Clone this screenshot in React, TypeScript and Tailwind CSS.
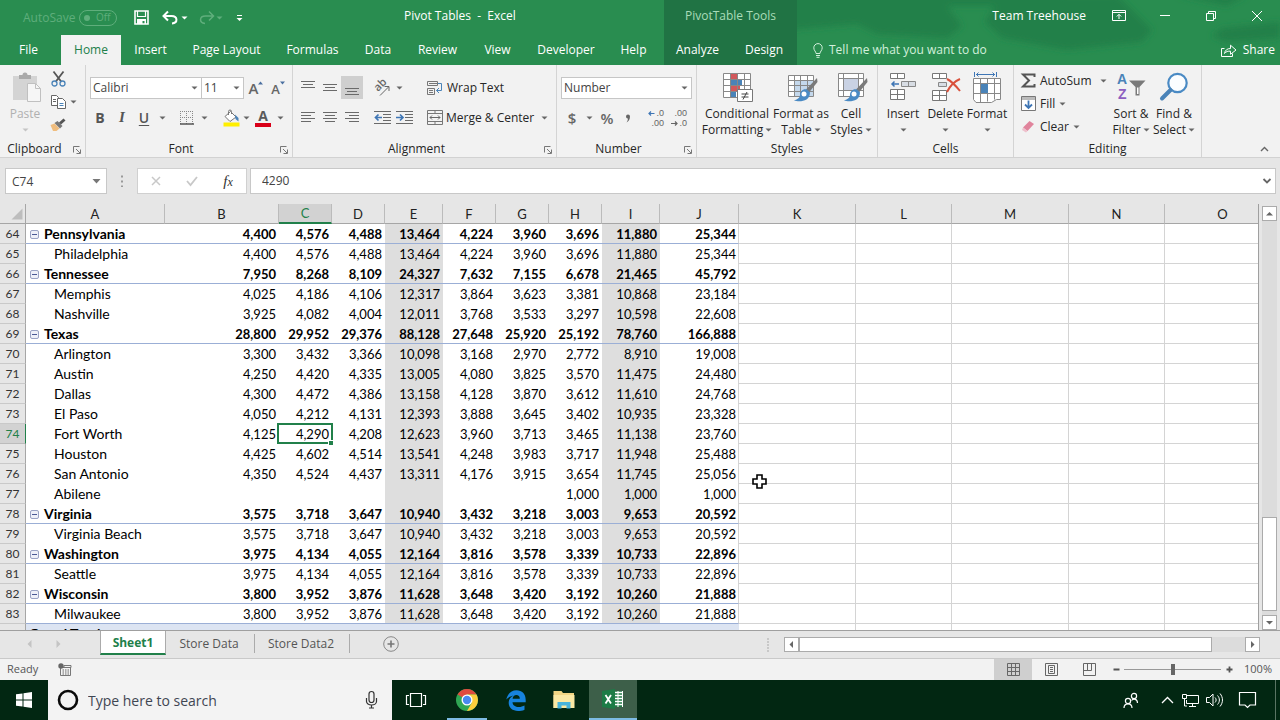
import React from "react";

type Kids = { children?: React.ReactNode };

function Svg({ w, h, children, cls = "" }: { w: number; h: number; cls?: string } & Kids) {
  return (
    <svg width={w} height={h} viewBox={`0 0 ${w} ${h}`} fill="none" className={`shrink-0 overflow-visible ${cls}`} aria-hidden="true">
      {children}
    </svg>
  );
}

function Caret({ cls = "text-[#666]" }: { cls?: string }) {
  return (
    <Svg w={7} h={4} cls={cls}>
      <path d="M0.5 0.5h6l-3 3z" fill="currentColor" />
    </Svg>
  );
}

function IconButton({ label, cls, children }: { label: string; cls: string } & Kids) {
  return (
    <button type="button" aria-label={label} className={`flex shrink-0 items-center justify-center ${cls}`}>
      {children}
    </button>
  );
}

function Group({ title, cls, launcher = false, children }: { title: string; cls: string; launcher?: boolean } & Kids) {
  return (
    <section aria-label={title} className={`flex shrink-0 flex-col border-r border-[#d4d4d4] ${cls}`}>
      <div className="flex h-[76px] shrink-0">{children}</div>
      <div className="flex h-4 items-center leading-4">
        <span className="flex-1 text-center">{title}</span>
        {launcher && (
          <IconButton label={`${title} settings`} cls="mr-px h-4 w-[15px]">
            <Svg w={9} h={9}>
              <path d="M1.500 7.500V1.500H7.500M4 4l4 4M8.500 4.500v4h-4" stroke="#777" />
            </Svg>
          </IconButton>
        )}
      </div>
    </section>
  );
}

function Divider() {
  return <span className="h-6 w-px shrink-0 bg-[#dcdcdc]" />;
}

function BigButton({ cls, icon, a, b }: { cls: string; icon: React.ReactNode; a: string; b?: string }) {
  return (
    <button type="button" className={`flex shrink-0 flex-col items-center whitespace-nowrap leading-4 ${cls}`}>
      <span className="flex h-[41px] items-start pt-[7px]">{icon}</span>
      <span>{a}</span>
      <span className="flex h-4 items-center gap-0.5">
        {b}
        <Caret />
      </span>
    </button>
  );
}

function Lines({ rows }: { rows: [number, number, number][] }) {
  return (
    <Svg w={16} h={16}>
      {rows.map(([y, x1, x2]) => (
        <path key={y} d={`M${x1} ${y}.5H${x2}`} stroke="#6a6a6a" />
      ))}
    </Svg>
  );
}

/* ---------- Title bar and tabs ---------- */

function TitleBar() {
  return (
    <header className="relative shrink-0 overflow-hidden bg-[#298d50] text-xs text-white">
      <svg className="absolute top-0 right-0 h-[65px] w-[483px]" viewBox="0 0 483 65" fill="#248048" aria-hidden="true">
        <defs>
          <filter id="soft"><feGaussianBlur stdDeviation="3" /></filter>
        </defs>
        <g filter="url(#soft)">
          <path d="M-10 -10H270L250 6H150L165 26L150 38L80 34L60 24L-10 30Z" />
          <path d="M205 -5H320L355 30L345 42L270 50L205 38L188 22Z" />
          <path d="M425 28L483 22V38L430 42L415 36Z" />
          <path d="M380 -5H450L430 6Z" />
        </g>
      </svg>
      <div className="relative flex h-[35px] items-stretch">
        <div className="flex w-[404px] shrink-0 items-center pl-[23px]">
          <span className="w-[56px] whitespace-nowrap text-[#5fae7c]">AutoSave</span>
          <button type="button" role="switch" aria-checked="false" aria-label="AutoSave" className="flex h-4 w-[38px] items-center rounded-full border border-[#5fae7c] px-1 text-[10px] text-[#5fae7c]">
            <span className="mr-1.5 size-1.5 rounded-full bg-[#5fae7c]" />
            Off
          </button>
          <IconButton label="Save" cls="ml-4 h-6 w-[16px]">
            <Svg w={15} h={15}>
              <path d="M1 1h13v13H1z" stroke="#fff" strokeWidth="1.600" />
              <path d="M3.500 1v5.500h8V1" stroke="#fff" strokeWidth="1.200" />
              <path d="M3 9h9v5H10.500V11H8.500V14H3z" fill="#fff" />
            </Svg>
          </IconButton>
          <IconButton label="Undo" cls="ml-3 h-6 w-[18px]">
            <Svg w={16} h={14}>
              <path d="M2 5H9.500C16 5 16 12 10 12.500" stroke="#fff" strokeWidth="2" />
              <path d="M6 0.500L1.500 5L6 9.500" stroke="#fff" strokeWidth="2" />
            </Svg>
          </IconButton>
          <Caret cls="ml-0.5 text-white" />
          <IconButton label="Redo" cls="ml-2.5 h-6 w-[18px]">
            <Svg w={16} h={14}>
              <path d="M14 5H6.500C0 5 0 12 6 12.500M10 0.500L14.500 5L10 9.500" stroke="#5fae7c" strokeWidth="1.500" />
            </Svg>
          </IconButton>
          <Caret cls="text-[#5fae7c]" />
          <IconButton label="Customize quick access" cls="ml-2.5 h-6 w-3">
            <Svg w={7} h={8}>
              <path d="M1 1.500H6" stroke="#fff" />
              <path d="M0.500 4h6l-3 3z" fill="#fff" />
            </Svg>
          </IconButton>
        </div>
        <h1 className="flex w-[260px] shrink-0 items-center whitespace-pre pb-1">Pivot Tables  -  Excel</h1>
        <div className="flex w-[133px] shrink-0 items-center justify-center bg-[#207344] pb-1 text-[#a9dcb9]">PivotTable Tools</div>
        <div className="flex flex-1 items-center justify-end pb-1">
          <span className="pr-2.5 whitespace-nowrap">Team Treehouse</span>
          <IconButton label="Ribbon display options" cls="h-8 w-[46px]">
            <Svg w={14} h={12}>
              <path d="M0.500 0.500h13v10H0.500zM0.500 2.500h13M7 9V4.500M4.800 6.500L7 4.300L9.200 6.500" stroke="#fff" />
            </Svg>
          </IconButton>
          <IconButton label="Minimize" cls="h-8 w-[46px]">
            <Svg w={10} h={2}><path d="M0 0.500H10" stroke="#fff" /></Svg>
          </IconButton>
          <IconButton label="Restore" cls="h-8 w-[46px]">
            <Svg w={10} h={10}><path d="M0.500 2.500h7v7H0.500zM2.500 2.500V0.500H9.500V7.500H7.500" stroke="#fff" /></Svg>
          </IconButton>
          <IconButton label="Close" cls="h-8 w-[46px]">
            <Svg w={10} h={10}><path d="M0 0l10 10M10 0l-10 10" stroke="#fff" /></Svg>
          </IconButton>
        </div>
      </div>
      <nav className="relative flex h-[30px] items-stretch whitespace-nowrap">
        <button type="button" className="w-[61px] shrink-0 pr-1">File</button>
        <button type="button" className="w-[60px] shrink-0 bg-[#f2f2f2] text-[#21804a]">Home</button>
        <button type="button" className="w-[59px] shrink-0">Insert</button>
        <button type="button" className="w-[93px] shrink-0">Page Layout</button>
        <button type="button" className="w-[79px] shrink-0">Formulas</button>
        <button type="button" className="w-[52px] shrink-0">Data</button>
        <button type="button" className="w-[67px] shrink-0">Review</button>
        <button type="button" className="w-[53px] shrink-0">View</button>
        <button type="button" className="w-[84px] shrink-0">Developer</button>
        <button type="button" className="mr-[5px] w-[51px] shrink-0">Help</button>
        <button type="button" className="w-[67px] shrink-0 bg-[#207344]">Analyze</button>
        <button type="button" className="w-[66px] shrink-0 bg-[#207344]">Design</button>
        <button type="button" className="ml-4 flex items-center gap-1.5 text-[#d3f0dc]">
          <Svg w={10} h={15}>
            <path d="M3 10.500C3 8.500 0.800 7.500 0.800 4.800a4.200 4.200 0 0 1 8.400 0C9.200 7.500 7 8.500 7 10.500zM3 12.500h4M3.500 14.300h3" stroke="#d3f0dc" />
          </Svg>
          Tell me what you want to do
        </button>
        <button type="button" className="ml-auto flex items-center gap-1.5 pr-[5px]">
          <Svg w={16} h={13}>
            <path d="M3.500 4.500H0.500v8h11V9.500" stroke="#fff" />
            <path d="M3.500 9.500C4 6 6.500 4.500 9.500 4.500V1.200L15 6L9.500 10.300V7.200C7 7 5 7.500 3.500 9.500z" stroke="#fff" />
          </Svg>
          Share
        </button>
      </nav>
    </header>
  );
}

/* ---------- Ribbon ---------- */

function ClipboardGroup() {
  return (
    <Group title="Clipboard" cls="w-[86px]" launcher>
      <button type="button" className="flex w-[50px] flex-col items-center leading-4 text-[#b0b0b0]">
        <span className="flex h-[41px] items-start pt-[7px] pl-1">
          <Svg w={30} h={31}>
            <path d="M1 4h24v24H1z" fill="#d4d4d4" />
            <path d="M7 7V3h3.500a2.500 2.500 0 0 1 5 0H19v4z" fill="#aaa" />
            <path d="M15.500 11.500h8l5 5v13h-13z" fill="#f6f6f6" stroke="#c0c0c0" />
            <path d="M23.500 11.500v5h5" stroke="#c0c0c0" />
          </Svg>
        </span>
        Paste
        <span className="flex h-4 items-center"><Caret cls="text-[#c4c4c4]" /></span>
      </button>
      <div className="flex flex-col pt-[3px] pr-1">
        <IconButton label="Cut" cls="h-[22px] w-4">
          <Svg w={15} h={16}>
            <path d="M2.500 0.500L10.500 11M12.500 0.500L4.500 11" stroke="#555" strokeWidth="1.800" />
            <circle cx="3.500" cy="12.500" r="2.500" stroke="#4a83b8" strokeWidth="1.300" />
            <circle cx="11.500" cy="12.500" r="2.500" stroke="#4a83b8" strokeWidth="1.300" />
          </Svg>
        </IconButton>
        <span className="flex h-[23px] items-center gap-1">
          <IconButton label="Copy" cls="h-5 w-4">
            <Svg w={15} h={14}>
              <path d="M0.500 0.500h5l2 2v8h-7zM2 4.500h3M2 6.500h3" stroke="#666" fill="#fff" />
              <path d="M6.500 3.500h5l3 3v7h-8z" stroke="#666" fill="#fff" />
              <path d="M8.500 8.500h4M8.500 10.500h4" stroke="#4a83b8" />
            </Svg>
          </IconButton>
          <Caret />
        </span>
        <IconButton label="Format Painter" cls="h-[22px] w-4">
          <Svg w={16} h={13}>
            <path d="M0.500 7l4-1.500 5 5-3 2.500H3z" fill="#f0bd7e" />
            <path d="M4.500 5l3-2 5 5-2.500 2.500z" fill="#777" />
            <path d="M9 4.500L13.500 0.500l2 2L11 6.500z" fill="#555" />
          </Svg>
        </IconButton>
      </div>
    </Group>
  );
}

const boxCls = "appearance-none rounded-none border border-[#c6c6c6] bg-white outline-none";

function FontGroup() {
  return (
    <Group title="Font" cls="w-[207px]" launcher>
      <div className="flex flex-col pt-3 pl-1">
        <div className="flex h-[22px] items-center">
          <span className="relative flex items-center">
            <select aria-label="Font name" className={`h-[22px] w-[112px] pl-0.5 text-[#444] ${boxCls}`}><option>Calibri</option></select>
            <span className="pointer-events-none absolute right-1"><Caret /></span>
          </span>
          <span className="relative -ml-px flex items-center">
            <select aria-label="Font size" className={`h-[22px] w-[43px] pl-0.5 text-[#444] ${boxCls}`}><option>11</option></select>
            <span className="pointer-events-none absolute right-1"><Caret /></span>
          </span>
          <IconButton label="Increase font size" cls="w-6">
            <span className="text-[15px] font-semibold leading-4 text-[#666]">A</span>
            <span className="-mt-2.5"><Svg w={5} h={4}><path d="M0 3.500h5L2.500 0.500z" fill="#4a6fa0" /></Svg></span>
          </IconButton>
          <IconButton label="Decrease font size" cls="w-5">
            <span className="pt-0.5 text-[13px] font-semibold leading-4 text-[#666]">A</span>
            <span className="-mt-2.5"><Svg w={5} h={4}><path d="M0 0.500h5L2.500 3.500z" fill="#4a6fa0" /></Svg></span>
          </IconButton>
        </div>
        <div className="mt-2 flex h-[22px] items-center text-[14px] text-[#555]">
          <button type="button" className="w-5 font-bold">B</button>
          <button type="button" className="w-6 font-['Liberation_Serif',serif] text-[15px] font-bold italic">I</button>
          <button type="button" className="w-5 font-semibold underline underline-offset-2">U</button>
          <span className="flex w-4 justify-center"><Caret /></span>
          <span className="mx-1"><Divider /></span>
          <IconButton label="Borders" cls="w-[18px]">
            <Svg w={14} h={14}>
              <path d="M0 0.500H13M0 6.500H13M0.500 0V13M6.500 0V13M12.500 0V13" stroke="#888" strokeDasharray="1 1" />
              <path d="M0 13H14" stroke="#555" strokeWidth="1.500" />
            </Svg>
          </IconButton>
          <span className="flex w-4 justify-center"><Caret /></span>
          <span className="ml-1 mr-1.5"><Divider /></span>
          <IconButton label="Fill Color" cls="w-[18px]">
            <Svg w={17} h={17}>
              <path d="M2 6.500L7.500 1.500L13 7L7 11.500z" fill="#fff" stroke="#777" />
              <path d="M5.500 5V1.500a1.500 1.500 0 0 1 3 0V4" stroke="#777" />
              <path d="M12 4.500l3.500 3.500v3.500L12.500 9z" fill="#4a83b8" />
              <path d="M0.500 12.500h16v4H0.500z" fill="#ffef00" />
            </Svg>
          </IconButton>
          <span className="flex w-3 justify-center"><Caret /></span>
          <IconButton label="Font Color" cls="ml-0.5 w-[18px] flex-col">
            <span className="text-[14px] font-bold leading-3 text-[#5a5a5a]">A</span>
            <span className="mt-px h-1 w-4 bg-[#d90019]" />
          </IconButton>
          <span className="flex w-4 justify-center"><Caret /></span>
        </div>
      </div>
    </Group>
  );
}

function AlignmentGroup() {
  return (
    <Group title="Alignment" cls="w-[264px]" launcher>
      <div className="flex flex-col pt-[11px] pl-1">
        <div className="flex h-[23px] items-center">
          <IconButton label="Top align" cls="h-[23px] w-[22px]"><Lines rows={[[1, 1, 15], [4, 3, 13], [7, 1, 15]]} /></IconButton>
          <IconButton label="Middle align" cls="h-[23px] w-[22px]"><Lines rows={[[4, 1, 15], [7, 3, 13], [10, 1, 15]]} /></IconButton>
          <IconButton label="Bottom align" cls="h-[23px] w-[22px] bg-[#cfcfcf]"><Lines rows={[[8, 1, 15], [11, 3, 13], [14, 1, 15]]} /></IconButton>
          <span className="mx-1"><Divider /></span>
          <IconButton label="Orientation" cls="w-5">
            <Svg w={17} h={16}>
              <text x="0" y="0" transform="translate(5 12) rotate(-45)" fontSize="11" fontFamily="Open Sans" fontWeight="600" fill="#666">ab</text>
              <path d="M7 15.500L15.500 7M11.500 6.500h4.500V11" stroke="#666" />
            </Svg>
          </IconButton>
          <span className="flex w-3 justify-center pl-1"><Caret /></span>
          <span className="mx-3"><Divider /></span>
          <button type="button" className="flex items-center gap-1">
            <Svg w={16} h={16}>
              <path d="M0.500 1.500h10v4h-10zM0.500 8.500h7v6h-7zM2 3.500h12M2 10.500h4M2 12.500h4" stroke="#777" />
              <path d="M11 3.500h3.500v7H9.500M12 8l-2.500 2.500L12 13" stroke="#4a83b8" />
            </Svg>
            Wrap Text
          </button>
        </div>
        <div className="mt-2 flex h-[22px] items-center">
          <IconButton label="Align left" cls="w-[22px]"><Lines rows={[[2, 1, 15], [5, 1, 11], [8, 1, 15], [11, 1, 11]]} /></IconButton>
          <IconButton label="Center" cls="w-[22px]"><Lines rows={[[2, 1, 15], [5, 3, 13], [8, 1, 15], [11, 3, 13]]} /></IconButton>
          <IconButton label="Align right" cls="w-[22px]"><Lines rows={[[2, 1, 15], [5, 5, 15], [8, 1, 15], [11, 5, 15]]} /></IconButton>
          <span className="mx-1"><Divider /></span>
          <IconButton label="Decrease indent" cls="w-[22px]">
            <Svg w={17} h={14}>
              <path d="M0 0.500H17M9 3.500H17M9 6.500H17M9 9.500H17M0 12.500H17" stroke="#6a6a6a" />
              <path d="M8 6.500H2M4.500 3.500L1.500 6.500L4.500 9.500" stroke="#3f76b5" strokeWidth="1.700" />
            </Svg>
          </IconButton>
          <IconButton label="Increase indent" cls="w-[22px]">
            <Svg w={17} h={14}>
              <path d="M0 0.500H17M9 3.500H17M9 6.500H17M9 9.500H17M0 12.500H17" stroke="#6a6a6a" />
              <path d="M0 6.500H6M4 3.500L7 6.500L4 9.500" stroke="#3f76b5" strokeWidth="1.700" />
            </Svg>
          </IconButton>
          <span className="mr-3"><Divider /></span>
          <button type="button" className="flex items-center gap-[3px] whitespace-nowrap">
            <Svg w={16} h={16}>
              <path d="M0.500 0.500h15v14h-15zM0.500 3.500h15M0.500 11.500h15M8 0.500v3M8 11.500v3" stroke="#777" />
              <path d="M3 7.500H13M5 5.500l-2 2 2 2M11 5.500l2 2-2 2" stroke="#666" />
            </Svg>
            Merge &amp; Center
            <span className="ml-1"><Caret /></span>
          </button>
        </div>
      </div>
    </Group>
  );
}

function NumberGroup() {
  return (
    <Group title="Number" cls="w-[140px]" launcher>
      <div className="flex flex-col pt-3 pl-1">
        <span className="relative flex items-center">
          <select aria-label="Number format" className={`h-[22px] w-[131px] pl-0.5 text-[#444] ${boxCls}`}><option>Number</option></select>
          <span className="pointer-events-none absolute right-1"><Caret /></span>
        </span>
        <div className="mt-2 flex h-[22px] items-center text-[15px] text-[#666]">
          <button type="button" className="w-[22px] font-semibold">$</button>
          <span className="flex w-3 justify-center"><Caret /></span>
          <button type="button" className="w-[24px] font-semibold">%</button>
          <IconButton label="Comma Style" cls="w-[18px]">
            <Svg w={6} h={9}><path d="M1 2.500a2 2 0 1 1 4 0C5 5.500 3.500 7.500 1.500 8.500C2.500 7 3 6 2.800 4.500A2 2 0 0 1 1 2.500z" fill="#666" /></Svg>
          </IconButton>
          <span className="mx-1"><Divider /></span>
          <button type="button" aria-label="Increase decimal" className="flex w-[23px] flex-col items-end pr-1 font-['Liberation_Sans',sans-serif] text-[9px] leading-[10px]">
            <span className="flex items-center gap-px">
              <Svg w={7} h={5}><path d="M6.500 2.500H1M3 0.500L1 2.500L3 4.500" stroke="#3f76b5" strokeWidth="1.200" /></Svg>.0
            </span>
            <span>.00</span>
          </button>
          <button type="button" aria-label="Decrease decimal" className="flex w-[23px] flex-col items-end pr-1 font-['Liberation_Sans',sans-serif] text-[9px] leading-[10px]">
            <span>.00</span>
            <span className="flex items-center gap-px">
              <Svg w={7} h={5}><path d="M0 2.500H5.500M4 0.500L6 2.500L4 4.500" stroke="#666" strokeWidth="1.200" /></Svg>.0
            </span>
          </button>
        </div>
      </div>
    </Group>
  );
}

const Brush = () => (
  <>
    <path d="M30 6L19 17.500L22 20.500L30.500 10z" fill="#7a7a7a" />
    <path d="M20 17.500c-4-1-7 2-7 5.500c0 3-3 4.500-6 5.500c5 1.500 16 1.500 16-8z" fill="#4a8ac4" />
    <circle cx="17" cy="22" r="2.500" fill="#fff" />
  </>
);

function StylesGroup() {
  return (
    <Group title="Styles" cls="w-[181px]">
      <BigButton cls="ml-[7px] w-[66px]" a="Conditional" b="Formatting" icon={
        <Svg w={32} h={31} cls="ml-0.5">
          <path d="M1.500 1.500h27v24h-27z" fill="#fff" />
          <path d="M9 1h7v6H9zM9 13h9v6H9z" fill="#d2585b" />
          <path d="M9 7h11v6H9zM9 19h5v6H9z" fill="#4a83b8" />
          <path d="M1.500 1.500h27v24h-27zM1.500 7.500h27M1.500 13.500h27M1.500 19.500h27M8.500 1.500v24M15.500 1.500v24M22.500 1.500v24" stroke="#888" />
          <path d="M15.500 17.500h15v12h-15z" fill="#fff" stroke="#777" />
          <path d="M19.500 22h7M19.500 25h7M25 20l-4 7.500" stroke="#444" />
        </Svg>
      } />
      <BigButton cls="w-[62px]" a="Format as" b="Table" icon={
        <Svg w={32} h={31} cls="ml-1">
          <path d="M1.500 3.500h25v21h-25z" fill="#fff" />
          <path d="M8 9h18v15H8z" fill="#c4d8ec" />
          <path d="M1.500 3.500h25v21h-25zM1.500 8.500h25M1.500 13.500h25M1.500 19.500h25M7.500 3.500v21M13.500 3.500v21M20.500 3.500v21" stroke="#888" />
          <Brush />
        </Svg>
      } />
      <BigButton cls="w-[38px]" a="Cell" b="Styles" icon={
        <Svg w={32} h={31} cls="ml-1">
          <path d="M1.500 1.500h25v23h-25z" fill="#fff" />
          <path d="M7 6h14v12H7z" fill="#c9d2e4" />
          <path d="M1.500 1.500h25v23h-25zM1.500 6.500h25M1.500 18.500h25M6.500 1.500v23M21.500 1.500v23" stroke="#888" />
          <Brush />
        </Svg>
      } />
    </Group>
  );
}

function CellsGroup() {
  return (
    <Group title="Cells" cls="w-[136px]">
      <BigButton cls="ml-[3px] w-[44px]" a="Insert" icon={
        <Svg w={28} h={30}>
          <path d="M1.500 1.500h14v5h-14zM8.500 1.500v5M1.500 17.500h14v10h-14zM1.500 22.500h14M8.500 17.500v10" fill="#fff" stroke="#777" />
          <path d="M12.500 9.500h14v5h-14zM19.500 9.500v5" fill="#d8dde4" stroke="#888" />
          <path d="M10 12H3M5.500 9.500L3 12L5.500 14.500" stroke="#3f76b5" strokeWidth="1.500" />
        </Svg>
      } />
      <BigButton cls="w-[41px]" a="Delete" icon={
        <Svg w={30} h={30}>
          <path d="M1.500 1.500h14v5h-14zM8.500 1.500v5M1.500 18.500h14v10h-14zM1.500 23.500h14M8.500 18.500v10" fill="#fff" stroke="#777" />
          <path d="M7.500 10.500h8v4h-8z" fill="#d8dde4" stroke="#888" />
          <path d="M16 7c4 2 9 7 13 12M29 7c-5 2-10 7-13 13" stroke="#d9513c" strokeWidth="2" />
        </Svg>
      } />
      <BigButton cls="w-[42px]" a="Format" icon={
        <Svg w={30} h={32}>
          <path d="M2.500 0v5M24.500 0v5M4 2.500h19M6.500 0.500l-2 2 2 2M20.500 0.500l2 2-2 2" stroke="#3f76b5" />
          <path d="M1.500 6.500h27v21h-4l-5 3H4l-2.500-3zM1.500 11.500h27M1.500 21.500h27M8.500 6.500v24M15.500 6.500v23M22.500 6.500v21" fill="#fff" stroke="#888" />
          <path d="M9 12h7v9H9z" fill="#4a83b8" />
        </Svg>
      } />
    </Group>
  );
}

function EditingGroup() {
  return (
    <Group title="Editing" cls="w-[188px]">
      <div className="flex w-[96px] flex-col pt-1 pl-[7px]">
        <button type="button" className="flex h-[23px] items-center gap-1 whitespace-nowrap">
          <Svg w={15} h={15}><path d="M13.500 4V1.500H2L8 7.500L2 13.500H13.500V11" stroke="#555" strokeWidth="2" /></Svg>
          AutoSum
          <span className="ml-1"><Caret /></span>
        </button>
        <button type="button" className="flex h-[23px] items-center gap-1">
          <Svg w={15} h={15}>
            <path d="M0.500 0.500h14v14h-14z" fill="#fff" stroke="#777" />
            <path d="M1 1h13v3H1z" fill="#bbb" />
            <path d="M7.500 4.500V12M4 8.500l3.500 3.500L11 8.500" stroke="#3f76b5" strokeWidth="1.800" />
          </Svg>
          Fill
          <Caret />
        </button>
        <button type="button" className="flex h-[23px] items-center gap-1">
          <Svg w={15} h={15}>
            <path d="M2 8.500L8.500 2L13 5L6.500 12z" fill="#e0849c" />
            <path d="M2 8.500L6.500 12L5 13.500L1 11z" fill="#eec0cc" />
          </Svg>
          Clear
          <Caret />
        </button>
      </div>
      <BigButton cls="w-[42px]" a="Sort &amp;" b="Filter" icon={
        <Svg w={30} h={30}>
          <text x="1" y="12" fontSize="14" fontWeight="700" fontFamily="Liberation Sans" fill="#4a83b8">A</text>
          <text x="2" y="27" fontSize="14" fontWeight="700" fontFamily="Liberation Sans" fill="#8d5fc0">Z</text>
          <path d="M13 8.500h16.500L23.500 15v8.500h-4V15z" fill="#7a7a7a" />
          <path d="M21 15.500h1.500V22H21z" fill="#fff" />
        </Svg>
      } />
      <BigButton cls="w-[44px]" a="Find &amp;" b="Select" icon={
        <Svg w={30} h={30}>
          <circle cx="18.500" cy="11" r="9.200" fill="#fbfdff" stroke="#4a8ac4" strokeWidth="2.200" />
          <path d="M11.500 18L3 26.500" stroke="#4a83b8" strokeWidth="4" strokeLinecap="round" />
        </Svg>
      } />
    </Group>
  );
}

function Ribbon() {
  return (
    <div className="flex h-[93px] shrink-0 border-b border-[#d2d2d2] bg-[#f2f2f2] text-xs text-[#262626]">
      <ClipboardGroup />
      <FontGroup />
      <AlignmentGroup />
      <NumberGroup />
      <StylesGroup />
      <CellsGroup />
      <EditingGroup />
      <div className="flex flex-1 items-end justify-end pr-2.5 pb-0.5">
        <IconButton label="Collapse ribbon" cls="h-3 w-3">
          <Svg w={9} h={6}><path d="M1 5l3.500-3.500L8 5" stroke="#666" strokeWidth="1.400" /></Svg>
        </IconButton>
      </div>
    </div>
  );
}

/* ---------- Formula bar ---------- */

function FormulaBar() {
  return (
    <div className="flex h-[46px] shrink-0 items-start bg-[#e6e6e6] pt-2.5 pr-1 pl-[5px] text-xs text-[#444]">
      <span className="relative flex items-center">
        <input aria-label="Name box" defaultValue="C74" className="h-[26px] w-[102px] border border-[#c8c8c8] bg-white pl-1.5 outline-none" />
        <span className="pointer-events-none absolute right-1.5 flex"><Svg w={9} h={5}><path d="M0.500 0h8L4.500 4.500z" fill="#777" /></Svg></span>
      </span>
      <span className="flex h-[26px] w-[30px] items-center justify-center">
        <Svg w={2} h={12}><path d="M1 0.500V12" stroke="#999" strokeWidth="2" strokeDasharray="2 3" /></Svg>
      </span>
      <div className="mr-[3px] flex h-[26px] w-[110px] items-center border border-[#d0d0d0] bg-white">
        <IconButton label="Cancel" cls="w-9"><Svg w={10} h={10}><path d="M1 1l8 8M9 1l-8 8" stroke="#c8c8c8" strokeWidth="1.500" /></Svg></IconButton>
        <IconButton label="Enter" cls="w-9"><Svg w={12} h={10}><path d="M1 5l3.500 4L11 1" stroke="#c8c8c8" strokeWidth="1.800" /></Svg></IconButton>
        <button type="button" aria-label="Insert function" className="w-9 font-['Liberation_Serif',serif] text-[15px] leading-5 italic text-[#333]">
          f<span className="text-xs">x</span>
        </button>
      </div>
      <div className="flex h-[26px] flex-1 items-center border border-[#c8c8c8] bg-white pr-1">
        <input aria-label="Formula" defaultValue="4290" className="min-w-0 flex-1 pl-[11px] outline-none" />
        <Svg w={8} h={6}><path d="M0.500 1l3.500 3.500L7.500 1" stroke="#666" strokeWidth="1.800" /></Svg>
      </div>
    </div>
  );
}

/* ---------- Grid ---------- */

type Row = [string, boolean, string[]];

const rows: Row[] = [
  ["Pennsylvania", true, ["4,400", "4,576", "4,488", "13,464", "4,224", "3,960", "3,696", "11,880", "25,344"]],
  ["Philadelphia", false, ["4,400", "4,576", "4,488", "13,464", "4,224", "3,960", "3,696", "11,880", "25,344"]],
  ["Tennessee", true, ["7,950", "8,268", "8,109", "24,327", "7,632", "7,155", "6,678", "21,465", "45,792"]],
  ["Memphis", false, ["4,025", "4,186", "4,106", "12,317", "3,864", "3,623", "3,381", "10,868", "23,184"]],
  ["Nashville", false, ["3,925", "4,082", "4,004", "12,011", "3,768", "3,533", "3,297", "10,598", "22,608"]],
  ["Texas", true, ["28,800", "29,952", "29,376", "88,128", "27,648", "25,920", "25,192", "78,760", "166,888"]],
  ["Arlington", false, ["3,300", "3,432", "3,366", "10,098", "3,168", "2,970", "2,772", "8,910", "19,008"]],
  ["Austin", false, ["4,250", "4,420", "4,335", "13,005", "4,080", "3,825", "3,570", "11,475", "24,480"]],
  ["Dallas", false, ["4,300", "4,472", "4,386", "13,158", "4,128", "3,870", "3,612", "11,610", "24,768"]],
  ["El Paso", false, ["4,050", "4,212", "4,131", "12,393", "3,888", "3,645", "3,402", "10,935", "23,328"]],
  ["Fort Worth", false, ["4,125", "4,290", "4,208", "12,623", "3,960", "3,713", "3,465", "11,138", "23,760"]],
  ["Houston", false, ["4,425", "4,602", "4,514", "13,541", "4,248", "3,983", "3,717", "11,948", "25,488"]],
  ["San Antonio", false, ["4,350", "4,524", "4,437", "13,311", "4,176", "3,915", "3,654", "11,745", "25,056"]],
  ["Abilene", false, ["", "", "", "", "", "", "1,000", "1,000", "1,000"]],
  ["Virginia", true, ["3,575", "3,718", "3,647", "10,940", "3,432", "3,218", "3,003", "9,653", "20,592"]],
  ["Virginia Beach", false, ["3,575", "3,718", "3,647", "10,940", "3,432", "3,218", "3,003", "9,653", "20,592"]],
  ["Washington", true, ["3,975", "4,134", "4,055", "12,164", "3,816", "3,578", "3,339", "10,733", "22,896"]],
  ["Seattle", false, ["3,975", "4,134", "4,055", "12,164", "3,816", "3,578", "3,339", "10,733", "22,896"]],
  ["Wisconsin", true, ["3,800", "3,952", "3,876", "11,628", "3,648", "3,420", "3,192", "10,260", "21,888"]],
  ["Milwaukee", false, ["3,800", "3,952", "3,876", "11,628", "3,648", "3,420", "3,192", "10,260", "21,888"]],
];

const columns = ["A", "B", "C", "D", "E", "F", "G", "H", "I", "J", "K", "L", "M", "N", "O"];
const blanks = ["K", "L", "M", "N", "O"];
const FIRST = 64;
const ACTIVE = 74;

function Grid() {
  return (
    <div className="relative min-w-0 flex-1 overflow-hidden border-r border-[#9f9f9f] bg-white">
      <table className="w-[1281px] table-fixed border-separate border-spacing-0 font-['Lato',sans-serif] text-[13px] leading-[18px] text-black">
        <colgroup>
          <col className="w-[26px]" /><col className="w-[139px]" /><col className="w-[114px]" />
          <col className="w-[53px]" /><col className="w-[53px]" /><col className="w-[58px]" />
          <col className="w-[53px]" /><col className="w-[53px]" /><col className="w-[53px]" />
          <col className="w-[58px]" /><col className="w-[79px]" /><col className="w-[117px]" />
          <col className="w-[96px]" /><col className="w-[117px]" /><col className="w-[96px]" /><col className="w-[116px]" />
        </colgroup>
        <thead>
          <tr className="h-5 bg-[#e6e6e6]">
            <th className="border-r border-b border-[#a6a6a6] p-0 align-middle" aria-label="Select all">
              <Svg w={12} h={12} cls="ml-[11px] block"><path d="M11.500 0.500v11H0.500z" fill="#bdbdbd" /></Svg>
            </th>
            {columns.map((c) => (
              <th key={c} className={`h-5 border-r p-0 text-[13px] font-normal ${c === "C" ? "border-b-2 border-r-[#bbb] border-b-[#21804a] bg-[#d2d2d2] text-[#21804a]" : "border-b border-r-[#bbb] border-b-[#a6a6a6] text-[#222]"}`}>
                {c}
              </th>
            ))}
          </tr>
        </thead>
        <tbody>
          {rows.map(([name, parent, vals], i) => {
            const n = FIRST + i;
            const line = parent || i === rows.length - 1 ? "border-b border-[#9bafd6]" : "";
            return (
              <tr key={name} className={`h-5 align-top ${parent ? "font-bold" : ""}`}>
                <th className={`border-r border-b p-0 pt-px text-center text-xs leading-[18px] font-normal ${n === ACTIVE ? "border-r-[#21804a] border-b-[#bbb] bg-[#d2d2d2] text-[#21804a]" : "border-r-[#a6a6a6] border-b-[#c9c9c9] bg-[#e6e6e6] text-[#333]"}`}>{n}</th>
                <td className={`p-0 pt-px text-[14px] leading-[18px] whitespace-nowrap ${line}`}>
                  {parent ? (
                    <span className="flex items-center pl-1">
                      <button type="button" aria-label={`Collapse ${name}`} className="mr-[5px] flex size-[9px] items-center justify-center rounded-[2px] border border-[#9aa3c4] bg-[#eef0f8]">
                        <span className="h-px w-[5px] bg-[#4a5a94]" />
                      </button>
                      {name}
                    </span>
                  ) : (
                    <span className="block pl-7">{name}</span>
                  )}
                </td>
                {vals.map((v, j) => (
                  <td
                    key={j}
                    className={`p-0 pt-px text-right ${line} ${j === 3 || j === 7 ? "bg-[#dedede]" : ""} ${j === 8 ? "border-r border-r-[#d4d4d4] pr-0.5" : "pr-[3px]"} ${n === ACTIVE && j === 1 ? "relative" : ""}`}
                  >
                    {v}
                    {n === ACTIVE && j === 1 && (
                      <>
                        <span className="absolute -top-px -right-px bottom-0 -left-0.5 border-2 border-[#21804a]" />
                        <span className="absolute -right-0.5 -bottom-0.5 size-1.5 border border-white bg-[#21804a]" />
                      </>
                    )}
                  </td>
                ))}
                {blanks.map((b) => (
                  <td key={b} className="border-r border-b border-[#d4d4d4] p-0" />
                ))}
              </tr>
            );
          })}
          <tr className="h-5 align-top font-bold">
            <th className="border-r border-[#a6a6a6] bg-[#e6e6e6] p-0 pt-px text-center text-xs leading-[18px] font-normal text-[#333]">84</th>
            <td className="bg-[#dce4f2] p-0 pt-px pl-[3px] text-[14px] leading-[18px]">Grand Total</td>
            <td colSpan={9} className="bg-[#dce4f2] p-0" />
            {blanks.map((b) => (
              <td key={b} className="border-r border-b border-[#d4d4d4] p-0" />
            ))}
          </tr>
        </tbody>
      </table>
      <div className="absolute top-[270px] left-[752px]">
        <Svg w={15} h={15}>
          <path d="M5 1h5v4h4v5h-4v4H5v-4H1V5h4z" fill="#fff" stroke="#000" strokeWidth="1.600" />
        </Svg>
      </div>
    </div>
  );
}

function ScrollArrow({ label, d }: { label: string; d: string }) {
  return (
    <IconButton label={label} cls="size-[15px] border border-[#ababab] bg-white">
      <Svg w={7} h={7}><path d={d} fill="#666" /></Svg>
    </IconButton>
  );
}

function Sheet() {
  return (
    <main className="flex min-h-0 flex-1 border-b border-[#9f9f9f] bg-[#e6e6e6]">
      <Grid />
      <div className="flex w-[21px] shrink-0 flex-col items-center pt-0.5">
        <ScrollArrow label="Scroll up" d="M0 5.500h7L3.500 2z" />
        <div className="flex w-[15px] flex-1 flex-col justify-end bg-[#dcdcdc] pb-1">
          <div className="h-[94px] border border-[#ababab] bg-white" />
        </div>
        <ScrollArrow label="Scroll down" d="M0 2h7L3.500 5.500z" />
      </div>
    </main>
  );
}

/* ---------- Sheet tabs and status bar ---------- */

function SheetTabs() {
  return (
    <div className="flex h-[27px] shrink-0 items-start bg-[#e6e6e6] text-xs text-[#555]">
      <div className="flex h-[26px] w-[100px] shrink-0 items-center gap-6 pl-[27px]">
        <Svg w={5} h={8}><path d="M4.500 0v8L0.500 4z" fill="#c4c4c4" /></Svg>
        <Svg w={5} h={8}><path d="M0.500 0v8L4.500 4z" fill="#c4c4c4" /></Svg>
      </div>
      <button type="button" className="h-6 w-[66px] shrink-0 border-x border-b-2 border-x-[#ababab] border-b-[#21804a] bg-white pt-0.5 font-bold text-[#21804a]">Sheet1</button>
      <button type="button" className="mt-[3px] h-[19px] w-[89px] shrink-0 border-r border-[#ababab] pr-0.5 text-center">Store Data</button>
      <button type="button" className="mt-[3px] h-[19px] w-[95px] shrink-0 border-r border-[#ababab] pr-0.5 text-center">Store Data2</button>
      <IconButton label="New sheet" cls="ml-[33px] h-[26px] w-4">
        <Svg w={16} h={16}>
          <circle cx="8" cy="8" r="7.300" stroke="#888" />
          <path d="M8 4.500v7M4.500 8h7" stroke="#777" strokeWidth="1.600" />
        </Svg>
      </IconButton>
      <div className="ml-auto flex h-[27px] items-center pr-5">
        <span className="mr-[15px]"><Svg w={2} h={14}><path d="M1 0.500V14" stroke="#aaa" strokeDasharray="1 2" strokeWidth="2" /></Svg></span>
        <ScrollArrow label="Scroll left" d="M5 0v7L1.500 3.500z" />
        <div className="flex h-[15px] w-[446px] bg-[#dcdcdc]">
          <div className="w-[413px] border border-[#ababab] bg-white" />
        </div>
        <ScrollArrow label="Scroll right" d="M2 0v7L5.500 3.500z" />
      </div>
    </div>
  );
}

function StatusBar() {
  return (
    <footer className="flex h-[22px] shrink-0 items-center border-t border-[#c9c9c9] bg-[#f2f2f2] pl-[7px] text-[11px] text-[#555]">
      <span className="w-[51px]">Ready</span>
      <Svg w={14} h={13}>
        <path d="M2.500 4.500h10v8h-10zM6 2.500h7v2H6z" stroke="#777" />
        <path d="M4.500 7h7M4.500 9h7M4.500 11h7" stroke="#666" strokeDasharray="1.500 1" />
        <circle cx="3" cy="3" r="2.700" fill="#666" />
      </Svg>
      <div className="ml-auto flex items-center">
        <IconButton label="Normal view" cls="h-[21px] w-[38px] bg-[#cfcfcf]">
          <Svg w={13} h={13}><path d="M0.500 0.500h12v12h-12zM4.500 0.500v12M8.500 0.500v12M0.500 4.500h12M0.500 8.500h12" stroke="#666" /></Svg>
        </IconButton>
        <IconButton label="Page layout view" cls="h-[21px] w-[38px]">
          <Svg w={13} h={13}><path d="M0.500 0.500h12v12h-12zM3.500 2.500h6v8h-6zM5 4.500h3M5 6.500h3M5 8.500h3" stroke="#666" /></Svg>
        </IconButton>
        <IconButton label="Page break view" cls="h-[21px] w-[38px]">
          <Svg w={13} h={13}><path d="M0.500 0.500h12v12h-12zM0.500 7.500h8v-7M4.500 0.500v7" stroke="#666" /></Svg>
        </IconButton>
        <IconButton label="Zoom out" cls="w-4"><Svg w={7} h={7}><path d="M0.500 3.500h6" stroke="#555" strokeWidth="2" /></Svg></IconButton>
        <input
          type="range" aria-label="Zoom" min="0" max="200" defaultValue="100"
          className="h-4 w-[97px] appearance-none bg-transparent [&::-webkit-slider-runnable-track]:h-px [&::-webkit-slider-runnable-track]:bg-[#999] [&::-webkit-slider-thumb]:-mt-[5px] [&::-webkit-slider-thumb]:h-[11px] [&::-webkit-slider-thumb]:w-1 [&::-webkit-slider-thumb]:appearance-none [&::-webkit-slider-thumb]:bg-[#666]"
        />
        <IconButton label="Zoom in" cls="w-4"><Svg w={7} h={7}><path d="M0.500 3.500h6M3.500 0.500v6" stroke="#555" strokeWidth="1.800" /></Svg></IconButton>
        <span className="w-[43px] pr-2 text-right">100%</span>
      </div>
    </footer>
  );
}

/* ---------- Taskbar ---------- */

function Taskbar() {
  return (
    <div className="flex h-10 shrink-0 items-stretch bg-[#022712]">
      <IconButton label="Start" cls="w-12">
        <Svg w={16} h={16}><path d="M0 2.300L6.500 1.400V7.500H0zM7.500 1.200L16 0V7.500H7.500zM0 8.500H6.500V14.600L0 13.700zM7.500 8.500H16V16L7.500 14.800z" fill="#fff" /></Svg>
      </IconButton>
      <label className="flex w-[344px] shrink-0 items-center bg-[#f3f3f3] pr-3.5 pl-[9px]">
        <Svg w={22} h={22}><circle cx="11" cy="11" r="9" stroke="#0a0a0a" strokeWidth="2.600" /></Svg>
        <input aria-label="Search" placeholder="Type here to search" className="ml-[9px] min-w-0 flex-1 text-[14px] outline-none placeholder:text-[#3f4652]" />
        <Svg w={13} h={18}>
          <path d="M4 3a2.500 2.500 0 0 1 5 0v6a2.500 2.500 0 0 1-5 0zM1.500 7v3.500a5 3.500 0 0 0 10 0V7M6.500 14v3M4 17h5" stroke="#333" strokeWidth="1.200" />
        </Svg>
      </label>
      <IconButton label="Task view" cls="w-[50px] pr-0.5">
        <Svg w={20} h={14}><path d="M4.500 0.500h11v13h-11zM3 2.500H0.500v9H3M17 2.500h2.500v9H17" stroke="#fff" strokeWidth="1.200" /></Svg>
      </IconButton>
      <IconButton label="Chrome" cls="ml-[5px] w-10 border-b-2 border-[#7dbbe3] pt-0.5">
        <Svg w={22} h={22}>
          <circle cx="11" cy="11" r="11" fill="#2fa653" />
          <path d="M11 11L1.500 5.500A11 11 0 0 1 20.500 5.500H11z" fill="#df4a3e" />
          <path d="M11 5.500H20.500A11 11 0 0 1 11 22L15.800 13.800z" fill="#fccd3c" />
          <circle cx="11" cy="11" r="5.500" fill="#fff" />
          <circle cx="11" cy="11" r="4.200" fill="#4889f0" />
        </Svg>
      </IconButton>
      <IconButton label="Edge" cls="ml-[5px] w-12">
        <Svg w={20} h={21}>
          <path d="M0.300 9.500C1.500 3.500 5.500 0.300 10.500 0.300c5.500 0 9.200 3.700 9.200 9.500v2.500H6.500c0.300 3.300 3 4.700 6.200 4.700c2.200 0 4.200-0.600 5.800-1.500v4.200c-2 1-4.200 1.300-6.500 1.300c-5.500 0-9.300-3.200-9.300-8.200c0-3.500 2-6 4.800-7.200C4.500 6.300 2 7.300 0.300 9.500zM6.600 8.700h7.200c0-2.500-1.300-3.700-3.500-3.700c-2 0-3.300 1.300-3.700 3.700z" fill="#1783de" />
        </Svg>
      </IconButton>
      <IconButton label="File Explorer" cls="w-12">
        <Svg w={22} h={18}>
          <path d="M0.500 0h8l1.500 2h11v15H0.500z" fill="#f2d684" />
          <path d="M0.500 4h21v13H0.500z" fill="#fbe9a4" />
          <path d="M4.500 17.500v-6.500h13v6.500h-4v-3h-5v3z" fill="#48b4dc" />
        </Svg>
      </IconButton>
      <IconButton label="Excel" cls="ml-px w-12 border-b-2 border-[#7dbbe3] bg-[#3d5f49]">
        <Svg w={22} h={20}>
          <path d="M12 2h9v16h-9z" fill="#1f7a45" />
          <path d="M12.500 3.500h8M12.500 6.500h8M12.500 9.500h8M12.500 12.500h8M12.500 15.500h8" stroke="#fff" strokeWidth="1.500" />
          <path d="M16 2v16M20.500 2v16" stroke="#fff" />
          <path d="M0 2L13 0V20L0 18z" fill="#1c7c46" />
          <path d="M3.500 6l5.500 8.500M9 6l-5.500 8.500" stroke="#fff" strokeWidth="1.800" />
        </Svg>
      </IconButton>
      <div className="ml-auto flex items-center">
        <IconButton label="People" cls="w-11">
          <Svg w={16} h={17}>
            <circle cx="11" cy="4" r="2.600" stroke="#fff" strokeWidth="1.200" />
            <circle cx="5" cy="9" r="2.600" stroke="#fff" strokeWidth="1.200" />
            <path d="M1 16c0-5.500 8-5.500 8 0M8.500 8.500c2-2.500 6-1.500 6 2.500" stroke="#fff" strokeWidth="1.200" />
          </Svg>
        </IconButton>
        <IconButton label="Hidden icons" cls="w-7"><Svg w={13} h={8}><path d="M1 7l5.500-5.500L12 7" stroke="#fff" strokeWidth="1.300" /></Svg></IconButton>
        <IconButton label="Network" cls="w-[18px]">
          <Svg w={17} h={15}><path d="M5 2.500h11.500v8H4.500V7M10.500 10.500v3M7 13.500h7M0.500 1.500h4v4h-4zM2.500 5.500v7.500h2.500" stroke="#fff" /></Svg>
        </IconButton>
        <IconButton label="Volume" cls="ml-1 w-[22px]">
          <Svg w={17} h={14}><path d="M0.500 4.500h3l3.500-3.500v12l-3.500-3.500h-3zM9 4.500c1.500 1.500 1.500 3.500 0 5M11.500 2.500c2.500 2.500 2.500 6.500 0 9M14 0.500c3.300 4 3.300 9 0 13" stroke="#fff" /></Svg>
        </IconButton>
        <IconButton label="Notifications" cls="ml-0.5 w-10">
          <Svg w={17} h={17}><path d="M0.500 0.500h16v12.500H11L8.500 15.500L6 13H0.500z" stroke="#fff" strokeWidth="1.200" /></Svg>
        </IconButton>
        <span className="ml-2 mr-1 h-10 w-px bg-[#5a7463]" />
      </div>
    </div>
  );
}

export default function App() {
  return (
    <div className="flex h-screen min-h-[480px] flex-col overflow-hidden font-['Open_Sans','Noto_Sans',sans-serif]">
      <TitleBar />
      <Ribbon />
      <FormulaBar />
      <Sheet />
      <SheetTabs />
      <StatusBar />
      <Taskbar />
    </div>
  );
}
